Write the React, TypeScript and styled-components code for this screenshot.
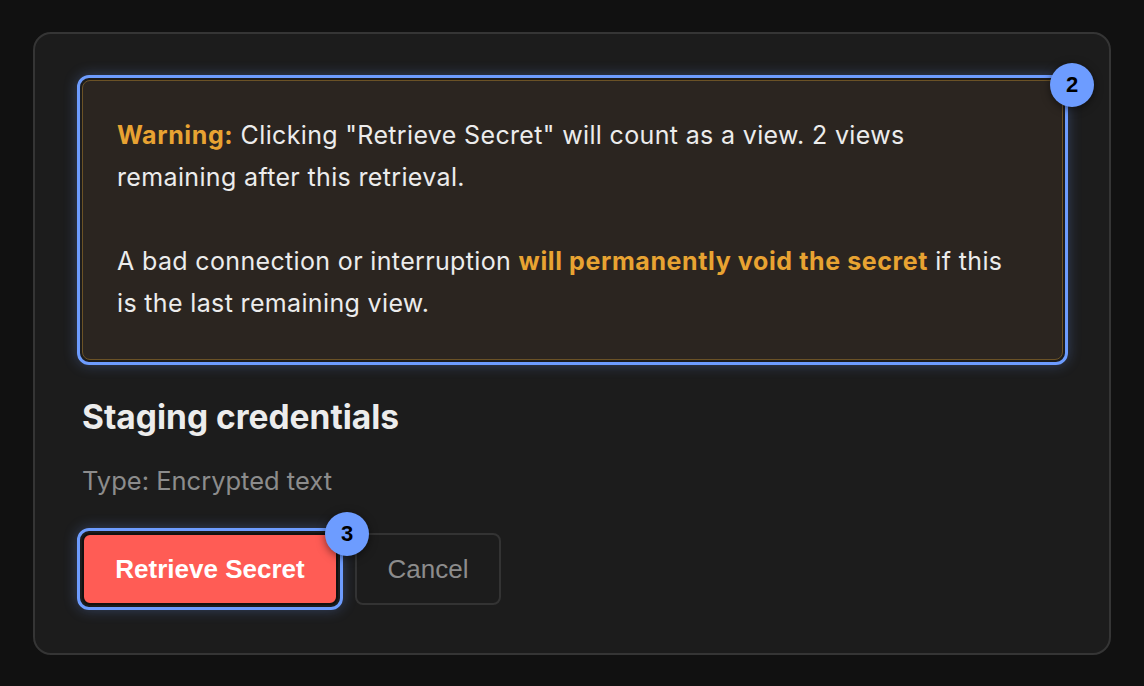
import styled, { createGlobalStyle } from 'styled-components';

const GlobalStyle = createGlobalStyle`
  html, body {
    margin: 0;
    padding: 0;
    background: #111111;
  }
  body {
    font-family: Inter, "Noto Sans", sans-serif;
    -webkit-font-smoothing: antialiased;
  }
`;

const Page = styled.div`
  min-height: 686px;
  box-sizing: border-box;
  padding: 32px 33px;
`;

const Card = styled.div`
  box-sizing: border-box;
  background: #1c1c1c;
  border: 2px solid #353535;
  border-radius: 18px;
  padding: 41px 41px 43px 42px;
  display: flex;
  flex-direction: column;
`;

const Highlight = styled.div<{ $inline?: boolean }>`
  position: relative;
  border: 3px solid #6d9cff;
  border-radius: 12px;
  padding: 2px;
  box-shadow: 0 0 14px rgba(109, 156, 255, 0.3);
  align-self: ${(p) => (p.$inline ? 'flex-start' : 'stretch')};
`;

const Badge = styled.span<{ $top: number }>`
  position: absolute;
  top: ${(p) => p.$top}px;
  right: -29px;
  width: 44px;
  height: 44px;
  border-radius: 50%;
  background: #6d9cff;
  color: #000;
  font-family: "Liberation Sans", Arial, sans-serif;
  font-weight: 700;
  font-size: 22px;
  display: flex;
  align-items: center;
  justify-content: center;
  box-shadow: 0 2px 8px rgba(0, 0, 0, 0.5);
  z-index: 2;
`;

const WarningBox = styled.div`
  background: #2b2520;
  border: 1px solid #6b5226;
  border-radius: 8px;
  padding: 34px 46px 35px 34px;
  color: #ececec;
  font-size: 25px;
  letter-spacing: 0.35px;
  line-height: 41.5px;
`;

const Para = styled.p`
  margin: 0 0 43px;
  &:last-child {
    margin-bottom: 0;
  }
`;

const Emph = styled.strong`
  color: #e8a332;
  font-weight: 700;
  letter-spacing: 0.6px;
`;

const Title = styled.h2`
  margin: 32px 0 0 5px;
  font-size: 33.5px;
  font-weight: 700;
  color: #ececec;
  line-height: 40px;
`;

const Meta = styled.div`
  margin: 29px 0 0 5px;
  font-size: 25.5px;
  color: #8c8c8c;
  line-height: 30px;
`;

const Actions = styled.div`
  margin-top: 32px;
  display: flex;
  align-items: center;
  gap: 12px;
`;

const Button = styled.button<{ $primary?: boolean }>`
  box-sizing: border-box;
  height: 72px;
  padding: 0;
  border-radius: 8px;
  font-family: "Liberation Sans", Arial, sans-serif;
  font-size: 26px;
  cursor: pointer;
  ${(p) =>
    p.$primary
      ? `
    width: 256px;
    background: #ff5c55;
    color: #ffffff;
    font-weight: 700;
    border: 2px solid #111;
  `
      : `
    width: 146px;
    background: transparent;
    color: #8c8c8c;
    font-weight: 400;
    border: 2px solid #333333;
  `}
`;

export default function App() {
  return (
    <>
      <GlobalStyle />
      <Page>
        <Card>
          <Highlight>
            <Badge $top={-15}>2</Badge>
            <WarningBox>
              <Para>
                <Emph>Warning:</Emph> Clicking "Retrieve Secret" will count as a view. 2 views
                remaining after this retrieval.
              </Para>
              <Para>
                A bad connection or interruption <Emph>will permanently void the secret</Emph> if
                this is the last remaining view.
              </Para>
            </WarningBox>
          </Highlight>
          <Title>Staging credentials</Title>
          <Meta>Type: Encrypted text</Meta>
          <Actions>
            <Highlight $inline>
              <Badge $top={-19}>3</Badge>
              <Button $primary>Retrieve Secret</Button>
            </Highlight>
            <Button>Cancel</Button>
          </Actions>
        </Card>
      </Page>
    </>
  );
}
